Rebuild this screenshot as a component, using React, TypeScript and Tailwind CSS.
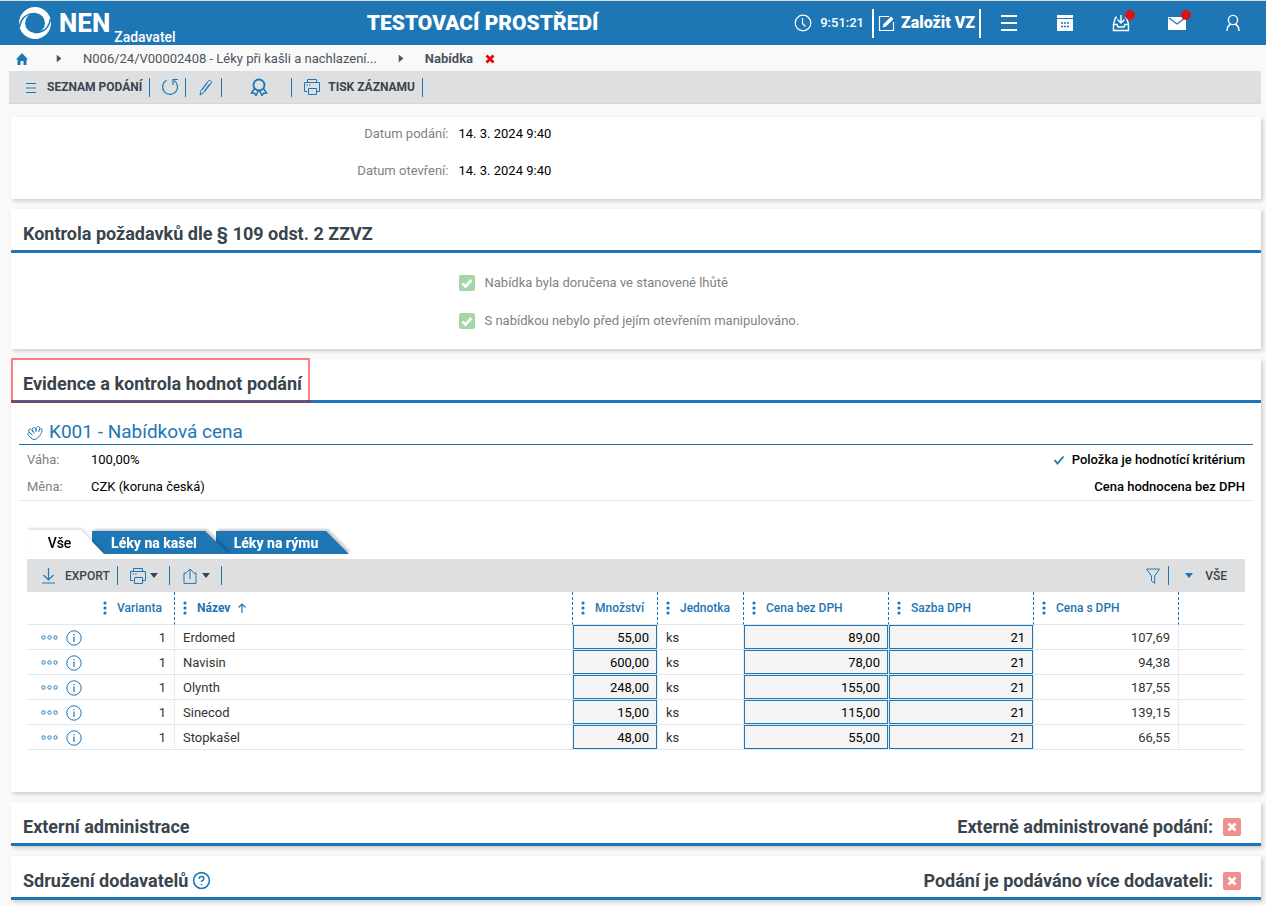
import type { ReactNode } from "react";
import { HelpCircle } from "lucide-react";

const rows = [
  { name: "Erdomed", amount: "55,00", unit: "ks", price: "89,00", vat: "21", total: "107,69" },
  { name: "Navisin", amount: "600,00", unit: "ks", price: "78,00", vat: "21", total: "94,38" },
  { name: "Olynth", amount: "248,00", unit: "ks", price: "155,00", vat: "21", total: "187,55" },
  { name: "Sinecod", amount: "15,00", unit: "ks", price: "115,00", vat: "21", total: "139,15" },
  { name: "Stopkašel", amount: "48,00", unit: "ks", price: "55,00", vat: "21", total: "66,55" },
];

function Icon({ size = 16, className = "", children }: { size?: number; className?: string; children: ReactNode }) {
  return (
    <svg
      width={size}
      height={size}
      viewBox={`0 0 ${size} ${size}`}
      fill="none"
      stroke="currentColor"
      strokeWidth="1.2"
      aria-hidden="true"
      className={`shrink-0 ${className}`}
    >
      {children}
    </svg>
  );
}

function PrinterIcon() {
  return (
    <Icon size={18}>
      <path d="M4.500 4.500V1.500h9v3M4.500 13.500H1.500v-9h15v9h-3M5.500 10.500h8v6h-8z" strokeWidth="1" />
      <path d="M3.500 7h1.500M6 7h1.500" />
    </Icon>
  );
}

function Caret({ className = "" }: { className?: string }) {
  return (
    <svg width="8" height="5" viewBox="0 0 8 5" fill="currentColor" aria-hidden="true" className={`shrink-0 ${className}`}>
      <path d="M0 0h8L4 5z" />
    </svg>
  );
}

function Logo() {
  return (
    <svg width="32" height="32" viewBox="0 0 32 32" fill="none" aria-hidden="true" className="shrink-0">
      <circle cx="16" cy="16" r="16" fill="#fff" />
      <circle cx="16" cy="16" r="10" fill="#1e76b5" />
      <path d="M.5 20C2 11 8 6 17 6.500M31.500 12C30 21 24 26 15 25.500" stroke="#1e76b5" strokeWidth="1.600" />
    </svg>
  );
}

function Bar() {
  return <span className="h-[19px] w-px bg-[#1e76b5]" />;
}

function Card({ children }: { children: ReactNode }) {
  return <section className="bg-white shadow-[2px_2px_4px_rgba(0,0,0,0.18)]">{children}</section>;
}

function CardHeader({ title, icon, marked, children }: { title: string; icon?: ReactNode; marked?: boolean; children?: ReactNode }) {
  return (
    <div className="relative flex h-11 items-center justify-between border-b-[3px] border-[#1e76b5] pt-2 pr-5 pl-3 text-[#39444d]">
      <h2 className="flex items-center gap-1 text-lg leading-6 font-bold">
        {title}
        {icon}
      </h2>
      {children}
      {marked && <span className="pointer-events-none absolute -top-px left-0 h-[45px] w-[299px] border-2 border-[#ff0000]/50" />}
    </div>
  );
}

function CheckRow({ label }: { label: string }) {
  return (
    <label className="ml-[35%] flex h-5 items-center gap-[10px] pl-[10px]">
      <span className="relative flex">
        <input type="checkbox" checked readOnly className="size-4 appearance-none rounded-[2px] bg-[#a5d6a7]" />
        <Icon className="pointer-events-none absolute inset-0 text-white">
          <path d="M3.500 8.500l3 3 6-6.500" strokeWidth="2.600" />
        </Icon>
      </span>
      <span className="text-[#828282]">{label}</span>
    </label>
  );
}

function CrossBox({ label }: { label: string }) {
  return (
    <label className="flex items-center gap-[10px] text-lg leading-6 font-bold">
      {label}
      <span className="relative flex">
        <input type="checkbox" readOnly checked={false} className="size-[18px] appearance-none rounded-[2px] bg-[#ee9090]" />
        <Icon size={18} className="pointer-events-none absolute inset-0 text-white">
          <path d="M5.500 5.500l7 7M12.500 5.500l-7 7" strokeWidth="2.800" />
        </Icon>
      </span>
    </label>
  );
}

function Field({ label, value }: { label: string; value: string }) {
  return (
    <div className="flex gap-[10px] leading-4">
      <dt className="w-[35%] text-right text-[#828282]">{label}</dt>
      <dd className="font-[450]">{value}</dd>
    </div>
  );
}

function Column({ label, sorted, className = "" }: { label?: string; sorted?: boolean; className?: string }) {
  return (
    <th className={`h-[33px] border-r border-b border-r-[#1e76b5] border-b-[#dfe8ee] p-0 font-medium [border-right-style:dashed] ${className}`}>
      {label && (
        <span className="flex items-center gap-[10px] pl-2">
          <svg width="4" height="14" viewBox="0 0 4 14" fill="currentColor" aria-hidden="true">
            <circle cx="2" cy="2" r="1.600" />
            <circle cx="2" cy="7" r="1.600" />
            <circle cx="2" cy="12" r="1.600" />
          </svg>
          <span className={sorted ? "font-bold" : ""}>{label}</span>
          {sorted && (
            <Icon size={10} className="-ml-[3px]">
              <path d="M5 10V1M1.500 4.500L5 1l3.500 3.500" />
            </Icon>
          )}
        </span>
      )}
    </th>
  );
}

function InputCell({ label, value }: { label: string; value: string }) {
  return (
    <td className="border-r border-b border-r-[#d5d9dc] border-b-[#dfe8ee] p-0 [border-right-style:dotted]">
      <input
        aria-label={label}
        defaultValue={value}
        className="block h-6 w-full border border-[#1e76b5] bg-[#f4f4f4] px-[7px] text-right font-[450] text-black"
      />
    </td>
  );
}

const cell = "border-r border-b border-r-[#d5d9dc] border-b-[#dfe8ee] px-2 pt-px pb-0 [border-right-style:dotted]";

export default function App() {
  return (
    <div className="min-h-screen bg-[#f9f9f9] font-[Roboto,sans-serif] text-[13px] text-black">
      <header className="flex h-[45px] items-center border-t border-[#dcdfe1] bg-[#1e76b5] pr-[5px] pl-[19px] text-white">
        <div className="flex h-full w-[28%] min-w-40 items-center">
          <Logo />
          <span className="ml-2 text-[26px] leading-8 font-extrabold">NEN</span>
          <span className="ml-1 self-end text-sm leading-4 font-medium">Zadavatel</span>
        </div>
        <div className="pt-0.5 text-[21px] font-black whitespace-nowrap">TESTOVACÍ PROSTŘEDÍ</div>
        <div className="flex flex-1 items-center justify-end">
          <Icon size={18}>
            <circle cx="9" cy="9" r="7.800" />
            <path d="M8.500 4v5.500l3 3" />
          </Icon>
          <time className="mx-2 font-medium">9:51:21</time>
          <button className="flex h-[29px] items-center gap-[6px] border-x-2 border-white px-1 text-base font-black whitespace-nowrap">
            <Icon size={17}>
              <path d="M11 1.500H1.500v14h14V7" />
              <path d="M4.500 12.500l1-3.500 7.500-7.500 2.500 2.500L8 11.500z" fill="currentColor" stroke="none" />
            </Icon>
            Založit VZ
          </button>
          <button aria-label="Menu" className="flex w-14 justify-center">
            <Icon size={18}>
              <path d="M1 2h16M1 9h16M1 16h16" strokeWidth="1.800" />
            </Icon>
          </button>
          <button aria-label="Kalendář" className="flex w-14 justify-center">
            <Icon size={18}>
              <path d="M1 1h16v3H1zM1 5h16v12H1z" fill="currentColor" stroke="none" />
              <path d="M5 9h2M8 9h2M11 9h2M5 12.500h2M8 12.500h2M11 12.500h2" stroke="#1e76b5" strokeWidth="1.500" />
            </Icon>
          </button>
          <button aria-label="Doručené" className="flex w-14 justify-center">
            <span className="relative">
              <Icon size={18}>
                <path d="M5 3.500H3.500L1.500 10v6.500h15V10l-2-6.500H13M1.500 10.500H5l1 2.500h6l1-2.500h3.500M9 1v7.500M5.500 5.500L9 9l3.500-3.500" strokeWidth="1.400" />
              </Icon>
              <span className="absolute -top-1 -right-[5px] size-[10px] rounded-full bg-[#d91414]" />
            </span>
          </button>
          <button aria-label="Zprávy" className="flex w-14 justify-center">
            <span className="relative">
              <Icon size={18}>
                <path d="M0 3h18v13H0z" fill="currentColor" stroke="none" />
                <path d="M1 4l8 6 8-6" stroke="#1e76b5" />
              </Icon>
              <span className="absolute -top-1 -right-[5px] size-[10px] rounded-full bg-[#d91414]" />
            </span>
          </button>
          <button aria-label="Uživatel" className="flex w-14 justify-center">
            <Icon size={18}>
              <circle cx="9" cy="6" r="4.600" strokeWidth="1.400" />
              <path d="M3 17c0-4 1.500-6 4-7M15 17c0-4-1.500-6-4-7" strokeWidth="1.400" />
            </Icon>
          </button>
        </div>
      </header>

      <nav className="flex h-[26px] items-center pt-px pl-4 text-[#4a545c]">
        <a href="#" aria-label="Domů" className="text-[#1e76b5]">
          <Icon size={12}>
            <path d="M6 0l6 6.500h-1.500V12h-3V8h-3v4h-3V6.500H0z" fill="currentColor" stroke="none" />
          </Icon>
        </a>
        <Caret className="mr-5 ml-[27px] -rotate-90" />
        <a href="#">N006/24/V00002408 - Léky při kašli a nachlazení...</a>
        <Caret className="mx-5 -rotate-90" />
        <span className="font-bold">Nabídka</span>
        <button aria-label="Zavřít" className="ml-3 text-[#f00000]">
          <Icon size={10}>
            <path d="M1.500 1.500l7 7M8.500 1.500l-7 7" strokeWidth="2.800" />
          </Icon>
        </button>
      </nav>

      <div className="mr-[5px] ml-[9px] flex h-[33px] items-center border-b border-[#d6d6d6] bg-[#dedfe1] pl-4 text-xs font-bold text-[#39444d]">
        <button className="mr-[7px] flex items-center gap-[10px]">
          <Icon size={12} className="text-[#1e76b5]">
            <path d="M1 2.500h10M1 7h10M1 11.500h10" />
          </Icon>
          SEZNAM PODÁNÍ
        </button>
        <Bar />
        <button aria-label="Obnovit" className="mr-[6px] ml-[11px] text-[#1e76b5]">
          <Icon size={18}>
            <path d="M5.500 2.300A7.500 7.500 0 1 0 13 2.500M17 1.500h-5v5.500" />
          </Icon>
        </button>
        <Bar />
        <button aria-label="Upravit" className="mr-[7px] ml-[11px] text-[#1e76b5]">
          <Icon size={17}>
            <path d="M3 16l1-4.500L11.500 1.800c1-1.200 3.800.6 2.800 2.200L7 13.500zM10.500 3.500L5 11M12.500 5L7 12.500" strokeWidth="1" />
          </Icon>
        </button>
        <Bar />
        <button aria-label="Certifikát" className="mr-[23px] ml-7 text-[#1e76b5]">
          <Icon size={18}>
            <circle cx="9" cy="7" r="5.500" strokeWidth="1.800" />
            <path d="M4.500 10.500L1.500 15l3 .2L6 17.500l2.500-5M13.500 10.500l3 4.500-3 .2-1.500 2.300-2.500-5" strokeWidth="1.500" />
          </Icon>
        </button>
        <Bar />
        <button className="mr-[7px] ml-[11px] flex items-center gap-[7px]">
          <span className="text-[#1e76b5]">
            <PrinterIcon />
          </span>
          TISK ZÁZNAMU
        </button>
        <Bar />
      </div>

      <main className="mt-[13px] mr-[5px] ml-[11px] flex flex-col gap-[10px] pb-[6px]">
        <Card>
          <dl className="flex flex-col gap-[21px] pt-[9px] pb-5">
            <Field label="Datum podání:" value="14. 3. 2024 9:40" />
            <Field label="Datum otevření:" value="14. 3. 2024 9:40" />
          </dl>
        </Card>

        <Card>
          <CardHeader title="Kontrola požadavků dle § 109 odst. 2 ZZVZ" />
          <div className="flex flex-col gap-[18px] pt-5 pb-[18px]">
            <CheckRow label="Nabídka byla doručena ve stanovené lhůtě" />
            <CheckRow label="S nabídkou nebylo před jejím otevřením manipulováno." />
          </div>
        </Card>

        <Card>
          <CardHeader title="Evidence a kontrola hodnot podání" marked />
          <div className="px-2 pt-4 pb-[42px]">
            <h3 className="flex h-[26px] items-center gap-[6px] border-b border-[#1e76b5] pt-0.5 pl-2 text-[19px] text-[#1e76b5]">
              <Icon>
                <path
                  d="M7 14.500C5 14.500 3 12 1 9.500.5 8 2 7 3 8l1 1C2 7 1 5.500 2 4.500s2-.5 3.500 1.500l1 1.500C5 5 5 3 6.500 2.500S9 4 9 5.500C9 3 10 1 11.500 1.500S13 3.500 12.500 5c1-2 2.500-1.500 2.500 0s-.5 3-1.500 4.500C12 12 10 14.500 7 14.500z"
                  strokeWidth="1"
                />
                <path d="M4 9l1.500 1M6.500 7.500l1 1M9 5.500v1.500M12.500 5l-1 2" strokeWidth="1" />
              </Icon>
              K001 - Nabídková cena
            </h3>
            <div className="flex justify-between border-b border-[#ececec] px-2 pt-px leading-[27px]">
              <dl className="grid grid-cols-[64px_auto] font-[450]">
                <dt className="font-normal text-[#828282]">Váha:</dt>
                <dd>100,00%</dd>
                <dt className="font-normal text-[#828282]">Měna:</dt>
                <dd>CZK (koruna česká)</dd>
              </dl>
              <div className="text-right font-medium">
                <p className="flex items-center gap-[7px]">
                  <Icon size={12} className="text-[#1e76b5]">
                    <path d="M1.500 6l3 3.500 6-7" strokeWidth="1.800" />
                  </Icon>
                  Položka je hodnotící kritérium
                </p>
                <p>Cena hodnocena bez DPH</p>
              </div>
            </div>

            <div className="px-2 pt-[27px]">
              <div role="tablist" className="flex h-[26px] items-end text-sm font-extrabold text-white">
                <div className="relative z-30 drop-shadow-[1px_-2px_1px_rgba(0,0,0,0.12)]">
                  <button role="tab" aria-selected="true" className="block h-6 w-[77px] bg-white pt-0.5 pr-3 font-medium text-black [clip-path:polygon(0_0,54px_0,100%_100%,0_100%)]">
                    Vše
                  </button>
                </div>
                <div className="relative z-20 -ml-3 drop-shadow-[2px_-2px_1px_rgba(0,0,0,0.2)]">
                  <button role="tab" aria-selected="false" className="block h-[23px] w-[137px] bg-[#1e76b5] pt-px pr-[13px] [clip-path:polygon(0_0,113px_0,100%_100%,0_100%)]">
                    Léky na kašel
                  </button>
                </div>
                <div className="relative z-10 -ml-[13px] drop-shadow-[2px_-2px_1px_rgba(0,0,0,0.2)]">
                  <button role="tab" aria-selected="false" className="block h-[23px] w-[133px] bg-[#1e76b5] pt-px pr-[13px] [clip-path:polygon(0_0,110px_0,100%_100%,0_100%)]">
                    Léky na rýmu
                  </button>
                </div>
              </div>

              <div className="mt-[5px] flex h-[33px] items-center bg-[#dedfe1] pl-[13px] text-xs font-medium text-[#39444d]">
                <button className="mr-[7px] flex items-center gap-2">
                  <Icon size={17} className="text-[#1e76b5]">
                    <path d="M8.500 1v12M3.500 8l5 5 5-5M2 16h13" />
                  </Icon>
                  EXPORT
                </button>
                <Bar />
                <button aria-label="Tisk" className="mr-[11px] ml-[11px] flex items-center gap-[3px]">
                  <span className="text-[#1e76b5]">
                    <PrinterIcon />
                  </span>
                  <Caret />
                </button>
                <Bar />
                <button aria-label="Sdílet" className="mr-[11px] ml-3 flex items-center gap-1">
                  <Icon size={16} className="text-[#1e76b5]">
                    <path d="M5 5H2v10.400h12V5h-3M8 11V1M5 4l3-3 3 3" strokeWidth="1" />
                  </Icon>
                  <Caret />
                </button>
                <Bar />
                <button aria-label="Filtr" className="mr-[7px] ml-auto text-[#1e76b5]">
                  <Icon>
                    <path d="M1.500 1h13L9.700 8v7.400L6.500 13V8z" strokeWidth="1" />
                  </Icon>
                </button>
                <Bar />
                <button className="mr-[18px] ml-4 flex items-center gap-3">
                  <Caret className="text-[#1e76b5]" />
                  VŠE
                </button>
              </div>

              <table className="w-full table-fixed border-separate border-spacing-0 text-left text-[#333]">
                <thead className="text-xs text-[#1e76b5]">
                  <tr>
                    <Column label="Varianta" className="w-[148px] pl-[68px]" />
                    <Column label="Název" sorted />
                    <Column label="Množství" className="w-[85px]" />
                    <Column label="Jednotka" className="w-[86px]" />
                    <Column label="Cena bez DPH" className="w-[145px]" />
                    <Column label="Sazba DPH" className="w-[145px]" />
                    <Column label="Cena s DPH" className="w-[145px]" />
                    <th className="w-[66px] border-b border-[#dfe8ee]" />
                  </tr>
                </thead>
                <tbody>
                  {rows.map((row) => (
                    <tr key={row.name} className="h-[25px]">
                      <td className={cell}>
                        <div className="flex items-center pl-[6px]">
                          <button aria-label="Možnosti" className="mr-2 text-[#1e76b5]">
                            <svg width="17" height="5" viewBox="0 0 17 5" fill="none" stroke="currentColor" className="block">
                              <circle cx="2.500" cy="2.500" r="1.700" />
                              <circle cx="8.500" cy="2.500" r="1.700" />
                              <circle cx="14.500" cy="2.500" r="1.700" />
                            </svg>
                          </button>
                          <button aria-label="Informace" className="text-[#1e76b5]">
                            <Icon>
                              <circle cx="8" cy="8" r="7.200" strokeWidth="1" />
                              <path d="M8 6.500V12M8 4v1.300" />
                            </Icon>
                          </button>
                          <span className="ml-auto">1</span>
                        </div>
                      </td>
                      <td className={cell}>{row.name}</td>
                      <InputCell label={`Množství ${row.name}`} value={row.amount} />
                      <td className={cell}>{row.unit}</td>
                      <InputCell label={`Cena bez DPH ${row.name}`} value={row.price} />
                      <InputCell label={`Sazba DPH ${row.name}`} value={row.vat} />
                      <td className={`${cell} text-right`}>{row.total}</td>
                      <td className="border-b border-[#dfe8ee]" />
                    </tr>
                  ))}
                </tbody>
              </table>
            </div>
          </div>
        </Card>

        <Card>
          <CardHeader title="Externí administrace">
            <CrossBox label="Externě administrované podání:" />
          </CardHeader>
        </Card>

        <Card>
          <CardHeader title="Sdružení dodavatelů" icon={<HelpCircle size={19} className="text-[#1e76b5]" />}>
            <CrossBox label="Podání je podáváno více dodavateli:" />
          </CardHeader>
        </Card>
      </main>
    </div>
  );
}
